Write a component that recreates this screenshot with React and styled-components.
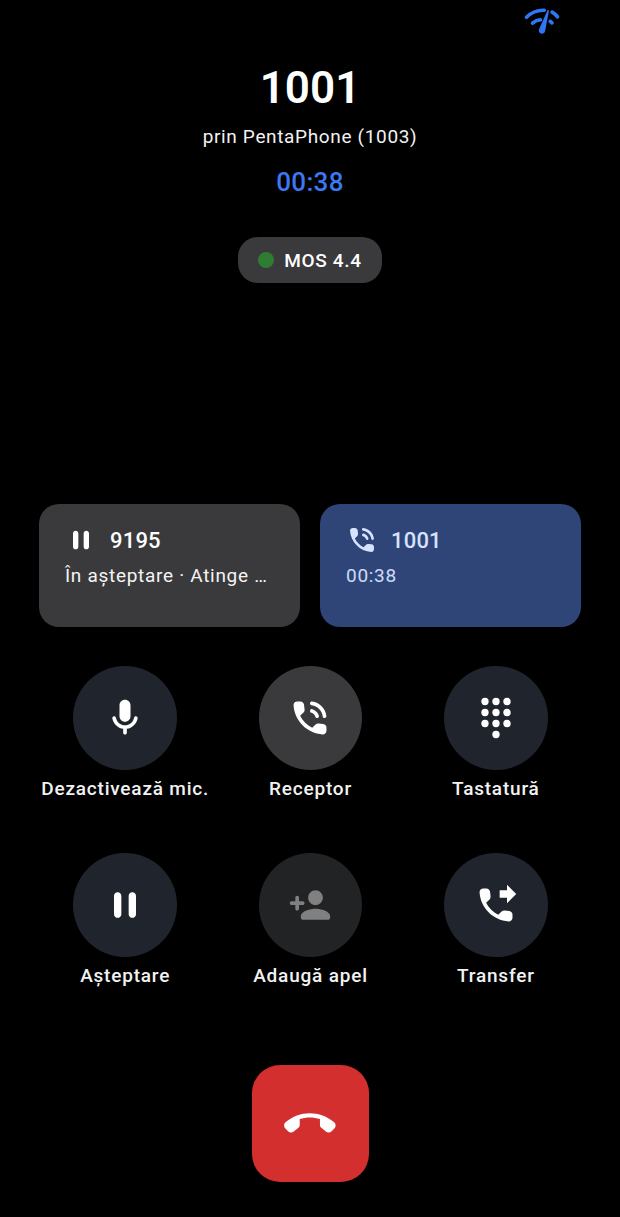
import styled, { createGlobalStyle } from "styled-components"

const PHONE = "M19.23 15.26l-2.54-.29c-.61-.07-1.21.14-1.64.57l-1.84 1.84c-2.83-1.44-5.15-3.75-6.59-6.59l1.85-1.85c.43-.43.64-1.03.57-1.64l-.29-2.52c-.12-1.01-.97-1.77-1.99-1.77H5.03c-1.13 0-2.07.94-2 2.07.53 8.54 7.36 15.36 15.89 15.89 1.13.07 2.07-.87 2.07-2v-1.73c.01-1.01-.75-1.86-1.76-1.98z"
const WAVES = "M12.88 5.05c3.18.4 5.67 2.89 6.07 6.07.06.51.49.88.99.88.04 0 .08 0 .12-.01.55-.07.94-.57.87-1.12-.51-4.09-3.72-7.3-7.81-7.81-.55-.06-1.05.33-1.11.88-.07.55.32 1.05.87 1.11zm.38 2.11c-.53-.14-1.08.18-1.22.72s.18 1.08.72 1.22c1.05.27 1.87 1.09 2.15 2.15.12.45.52.75.97.75.08 0 .17-.01.25-.03.53-.14.85-.69.72-1.22-.47-1.77-1.84-3.14-3.59-3.59z"
const PAUSE = "M8 19c1.1 0 2-.9 2-2V7c0-1.1-.9-2-2-2s-2 .9-2 2v10c0 1.1.9 2 2 2zm6-12v10c0 1.1.9 2 2 2s2-.9 2-2V7c0-1.1-.9-2-2-2s-2 .9-2 2z"

const Icon = ({ size = 24, children }) => (
    <svg width={size} height={size} viewBox="0 0 24 24" fill="currentColor">
        {children}
    </svg>
)

const SignalIcon = () => (
    <svg width="38" height="38" viewBox="0 0 24 24" fill="none" stroke="currentColor" strokeLinecap="round" strokeWidth="2.3">
        <path d="M2.2 9.6C5.5 6.4 9.4 5 13.4 5.2" />
        <path d="M18.4 6.4c1.2.6 2.3 1.5 3.4 3" />
        <path d="M6 13.4c1.7-1.4 3.2-2.1 5-2.2" />
        <path d="M17.2 12.2c.5.3.9.6 1.1 1" />
        <path d="M15.9 5c-.17 0-.32.09-.41.23l-.07.15-5.18 11.65c-.16.29-.26.61-.26.96 0 1.11.9 2.01 2.01 2.01.96 0 1.77-.68 1.96-1.59l.01-.03L16.4 5.5c0-.28-.22-.5-.5-.5z" fill="currentColor" stroke="none" />
    </svg>
)

const DialpadIcon = () => (
    <Icon size={44}>
        <circle cx="6" cy="3" r="2" />
        <circle cx="12" cy="3" r="2" />
        <circle cx="18" cy="3" r="2" />
        <circle cx="6" cy="9" r="2" />
        <circle cx="12" cy="9" r="2" />
        <circle cx="18" cy="9" r="2" />
        <circle cx="6" cy="15" r="2" />
        <circle cx="12" cy="15" r="2" />
        <circle cx="18" cy="15" r="2" />
        <circle cx="12" cy="21" r="2" />
    </Icon>
)

const controls = [
    { label: "Dezactivează mic.", icon: <Icon size={44}><path d="M12 14c1.66 0 3-1.34 3-3V5c0-1.66-1.34-3-3-3S9 3.34 9 5v6c0 1.66 1.34 3 3 3zm5.91-3c-.49 0-.9.36-.98.85C16.52 14.2 14.47 16 12 16s-4.52-1.8-4.93-4.15c-.08-.49-.49-.85-.98-.85-.61 0-1.09.54-1 1.14.49 3 2.89 5.35 5.91 5.78V20c0 .55.45 1 1 1s1-.45 1-1v-2.08c3.02-.43 5.42-2.78 5.91-5.78.1-.6-.39-1.14-1-1.14z" /></Icon> },
    { label: "Receptor", tone: "active", icon: <Icon size={44}><path d={WAVES} /><path d={PHONE} /></Icon> },
    { label: "Tastatură", icon: <DialpadIcon /> },
    { label: "Așteptare", icon: <Icon size={44}><path d={PAUSE} /></Icon> },
    { label: "Adaugă apel", tone: "disabled", icon: <Icon size={44}><path d="M15 12c2.21 0 4-1.79 4-4s-1.79-4-4-4-4 1.79-4 4 1.79 4 4 4zm-9-2V8c0-.55-.45-1-1-1s-1 .45-1 1v2H2c-.55 0-1 .45-1 1s.45 1 1 1h2v2c0 .55.45 1 1 1s1-.45 1-1v-2h2c.55 0 1-.45 1-1s-.45-1-1-1H6zm9 4c-2.67 0-8 1.34-8 4v1c0 .55.45 1 1 1h14c.55 0 1-.45 1-1v-1c0-2.66-5.33-4-8-4z" /></Icon> },
    { label: "Transfer", icon: <Icon size={44}><path d={PHONE} /><path d="M18 11l5-5-5-5v3h-4v4h4z" /></Icon> },
]

const App = () => {

    return (

        <Screen>

            <GlobalStyle />

            <StatusRow>
                <SignalIcon />
            </StatusRow>

            <Header>
                <Name>1001</Name>
                <Via>prin PentaPhone (1003)</Via>
                <Timer>00:38</Timer>
                <Quality>
                    <Dot />
                    <span>MOS 4.4</span>
                </Quality>
            </Header>

            <Calls>
                <CallCard>
                    <CardTitle>
                        <CardIcon><Icon size={32}><path d={PAUSE} /></Icon></CardIcon>
                        <CardNumber>9195</CardNumber>
                    </CardTitle>
                    <CardInfo>În așteptare · Atinge …</CardInfo>
                </CallCard>
                <CallCard $active>
                    <CardTitle>
                        <CardIcon><Icon size={32}><path d={WAVES} /><path d={PHONE} /></Icon></CardIcon>
                        <CardNumber>1001</CardNumber>
                    </CardTitle>
                    <CardInfo>00:38</CardInfo>
                </CallCard>
            </Calls>

            <Controls>
                {controls.map((item) => (
                    <Control key={item.label}>
                        <Round $tone={item.tone}>{item.icon}</Round>
                        <Label>{item.label}</Label>
                    </Control>
                ))}
            </Controls>

            <HangUp aria-label="Închide">
                <Icon size={52}>
                    <path d="M4.51 15.48l2-1.59c.48-.38.76-.96.76-1.57v-2.6c3.02-.98 6.29-.99 9.32 0v2.61c0 .61.28 1.19.76 1.57l1.99 1.58c.8.63 1.94.57 2.66-.15l1.22-1.22c.8-.8.8-2.13-.05-2.88-6.41-5.66-16.07-5.66-22.48 0-.85.75-.85 2.08-.05 2.88l1.22 1.22c.71.72 1.85.78 2.65.15z" />
                </Icon>
            </HangUp>

        </Screen>

    )

}

const GlobalStyle = createGlobalStyle`
    * {
        box-sizing: border-box;
    }

    body {
        margin: 0;
        background: #000;
        font-family: Roboto, "Noto Sans", sans-serif;
    }
`

const Screen = styled.main`
    width: 620px;
    height: 1217px;
    background: #000;
    color: #fff;
    display: flex;
    flex-direction: column;
    align-items: center;
    overflow: hidden;
`

const StatusRow = styled.div`
    width: 100%;
    height: 40px;
    padding: 2px 59px 0 0;
    display: flex;
    justify-content: flex-end;
    color: #2f76f5;
`

const Header = styled.header`
    display: flex;
    flex-direction: column;
    align-items: center;
`

const Name = styled.h1`
    margin: 19px 0 0;
    font-size: 44px;
    line-height: 58px;
    font-weight: 600;
`

const Via = styled.p`
    margin: 7px 0 0;
    font-size: 19px;
    line-height: 26px;
    letter-spacing: 0.65px;
    color: #f2f2f2;
`

const Timer = styled.div`
    margin-top: 16px;
    font-size: 26px;
    line-height: 32px;
    font-weight: 500;
    letter-spacing: 0.3px;
    color: #3b78f2;
`

const Quality = styled.div`
    margin-top: 39px;
    height: 46px;
    padding: 0 20px;
    border-radius: 20px;
    background: #3a3a3c;
    display: flex;
    align-items: center;
    gap: 10px;
    font-size: 19px;
    font-weight: 500;
    letter-spacing: 0.7px;
`

const Dot = styled.i`
    width: 16px;
    height: 16px;
    border-radius: 50%;
    background: #2e7d32;
`

const Calls = styled.section`
    width: 100%;
    margin-top: 221px;
    padding: 0 39px;
    display: grid;
    grid-template-columns: 1fr 1fr;
    gap: 20px;
`

const CallCard = styled.article`
    min-width: 0;
    height: 123px;
    padding: 20px 26px;
    border-radius: 20px;
    background: ${(props) => (props.$active ? "#2f4578" : "#3a3a3c")};
    color: ${(props) => (props.$active ? "#d6e2ff" : "#fff")};
`

const CardTitle = styled.div`
    height: 32px;
    display: flex;
    align-items: center;
    gap: 13px;
`

const CardIcon = styled.span`
    width: 32px;
    height: 32px;
    display: flex;
`

const CardNumber = styled.span`
    font-size: 22px;
    font-weight: 500;
    letter-spacing: 0.2px;
`

const CardInfo = styled.p`
    margin: 8px 0 0;
    font-size: 19px;
    line-height: 24px;
    letter-spacing: 0.7px;
    white-space: nowrap;
    opacity: 0.95;
`

const Controls = styled.section`
    width: 100%;
    margin-top: 39px;
    padding: 0 31.5px 0 32.5px;
    display: grid;
    grid-template-columns: repeat(3, 1fr);
    row-gap: 23px;
`

const Control = styled.div`
    height: 164px;
    display: flex;
    flex-direction: column;
    align-items: center;
    gap: 5px;
`

const toneBg = { active: "#3a3a3c", disabled: "#222324" }
const toneFg = { disabled: "#808080" }

const Round = styled.div`
    width: 103.5px;
    height: 104px;
    border-radius: 50%;
    background: ${(props) => toneBg[props.$tone] || "#20252d"};
    color: ${(props) => toneFg[props.$tone] || "#fff"};
    display: flex;
    align-items: center;
    justify-content: center;
`

const Label = styled.span`
    font-size: 19px;
    line-height: 28px;
    font-weight: 500;
    letter-spacing: 0.8px;
    white-space: nowrap;
    color: #f2f2f2;
`

const HangUp = styled.button`
    margin-top: 48px;
    width: 117px;
    height: 117px;
    padding: 0;
    border: none;
    border-radius: 28px;
    background: #d32f2f;
    color: #fff;
    display: flex;
    align-items: center;
    justify-content: center;
`

export default App
